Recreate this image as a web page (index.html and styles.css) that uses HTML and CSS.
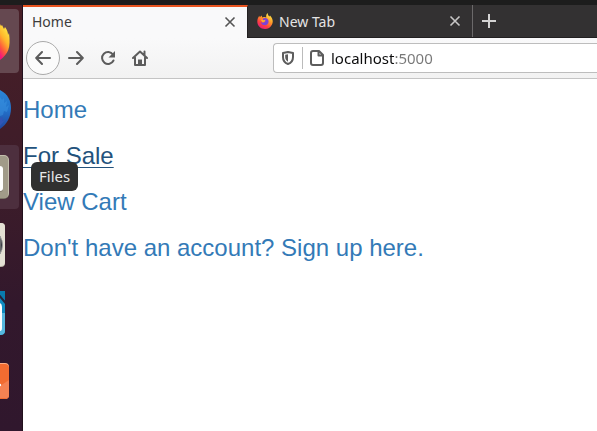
FILE: index.html
```
<!DOCTYPE html>
<html lang="en">
<head>
<meta charset="utf-8">
<title>Home</title>
<link rel="stylesheet" href="styles.css">
</head>
<body>
<div class="topbar"></div>
<div class="desktop">
  <nav class="dock" aria-label="Dock">
    <button class="tile tile-active" aria-label="Firefox">
      <svg width="19" height="64" viewBox="0 0 19 64">
        <defs><linearGradient id="fire" x1="0.7" y1="0" x2="0.3" y2="1"><stop offset="0" stop-color="#fff14a"/><stop offset=".45" stop-color="#ffb52b"/><stop offset=".75" stop-color="#ff5a3c"/><stop offset="1" stop-color="#f5157c"/></linearGradient></defs>
        <path d="M0 15l1 2 1-1 2 4 1-2c2 3 3 5 3 8l1-2c2 15-1 21-9 27z" fill="url(#fire)"/>
      </svg>
    </button>
    <button class="tile" aria-label="Thunderbird">
      <svg width="19" height="64" viewBox="0 0 19 64">
        <defs><linearGradient id="bird" x1="0" y1="0" x2="0" y2="1"><stop offset="0" stop-color="#2c86d8"/><stop offset=".5" stop-color="#2373cb"/><stop offset="1" stop-color="#2146a0"/></linearGradient></defs>
        <path d="M0 13C8 17 11 24 11 31c0 9-4 16-11 21z" fill="url(#bird)"/>
        <path d="M0 20l2 3 2-2v5l3-2-1 6 3-2-2 7-3-1-1 4-3 1z" fill="#429ae5" opacity=".4"/>
        <path d="M0 41l3-1-1 4 4-2-6 7z" fill="#3155b5"/>
      </svg>
    </button>
    <button class="tile tile-hover" aria-label="Files" aria-describedby="tip">
      <svg width="19" height="64" viewBox="0 0 19 64">
        <rect x="-30" y="11" width="39" height="43" rx="5" fill="#7d7768"/>
        <rect x="-30" y="10" width="39" height="43" rx="5" fill="#c4bfae"/>
        <rect x="-30" y="11" width="38" height="42" rx="4" fill="#a19b89"/>
        <rect x="-30" y="21" width="33" height="26" rx="3" fill="#857f70"/>
        <rect x="-30" y="21" width="33" height="25" rx="3" fill="#fff"/>
      </svg>
    </button>
    <button class="tile" aria-label="Rhythmbox">
      <svg width="19" height="64" viewBox="0 0 19 64">
        <rect x="-30" y="10" width="35" height="44" rx="4" fill="#b9b4a6"/>
        <rect x="-30" y="10" width="35" height="43" rx="4" fill="#e4e0d4"/>
        <path d="M0 23q5 9 0 18z" fill="#34373c" stroke="#999" stroke-width="1"/>
      </svg>
    </button>
    <button class="tile" aria-label="LibreOffice Writer">
      <svg width="19" height="64" viewBox="0 0 19 64">
        <path d="M0 10h5v10L0 14z" fill="#087bad"/>
        <path d="M0 15l5 6v29q0 4-5 4z" fill="#118bbf"/>
        <path d="M0 32h5v18q0 4-5 4z" fill="#55b8de"/>
        <path d="M0 22q2 1 2 4v21q0 3-2 3z" fill="#fff"/>
        <path d="M0 14l5 6v3l-5-6z" fill="#26243a"/>
      </svg>
    </button>
    <button class="tile" aria-label="Ubuntu Software">
      <svg width="19" height="64" viewBox="0 0 19 64">
        <rect x="-30" y="14" width="39" height="36" rx="4" fill="#ffaf85"/>
        <rect x="-30" y="15" width="39" height="35" rx="4" fill="#f26c31"/>
        <path d="M0 37l9-6v15q0 3-3 3H0z" fill="#f48253"/>
        <circle cx="0" cy="36" r="1.2" fill="#fff"/>
      </svg>
    </button>
  </nav>

  <div class="browser">
    <div class="tabs">
      <div class="tab tab-current">
        <button class="tab-label">Home</button>
        <button class="close" aria-label="Close Home tab"><svg width="12" height="12" viewBox="0 0 12 12"><path d="M1.500 1.500l9 9M10.500 1.500l-9 9"/></svg></button>
      </div>
      <div class="tab">
        <svg class="favicon" width="16" height="16" viewBox="0 0 16 16">
          <defs><linearGradient id="fox" x1=".8" y1="0" x2=".2" y2="1"><stop offset="0" stop-color="#fff44f"/><stop offset=".4" stop-color="#ff9a27"/><stop offset=".7" stop-color="#ff4040"/><stop offset="1" stop-color="#e31587"/></linearGradient></defs>
          <path d="M10.600 0c.2 2 1 2.700 1.900 3.500l.5-1c3 3 3.300 6.300 2 9C13.500 14.700 11 16 8 16 3.500 16 .3 12.700.3 8.500.3 6 1.200 4.200 2.300 2.800l.5 1.400L4.600 2.600l.7 1.800c2-.6 3.200-.5 4 .1C8.900 2.700 9.300 1.300 10.600 0z" fill="url(#fox)"/>
          <path d="M6 5.600c2.500-1.500 5.800 0 5.600 3.100-.2 2.700-2.600 3.900-4.800 3.300-1.600-.4-2.700-1.500-2.800-3.100 1.400 1 3.200.9 4.500-.3L6 8z" fill="#7b42d8"/>
          <path d="M3.500 6.500L7 7.300 8.500 6.500 8 8.300 5.800 9.500z" fill="#ffae2b"/>
        </svg>
        <button class="tab-label">New Tab</button>
        <button class="close" aria-label="Close New Tab"><svg width="12" height="12" viewBox="0 0 12 12"><path d="M1.500 1.500l9 9M10.500 1.500l-9 9"/></svg></button>
      </div>
      <button class="add" aria-label="Open a new tab"><svg width="14" height="14" viewBox="0 0 14 14"><path d="M7 0v14M0 7h14"/></svg></button>
    </div>

    <div class="toolbar">
      <button class="tool back" aria-label="Back"><svg width="16" height="16" viewBox="0 0 16 16"><path d="M15 8H1.500M7 2L1.200 8 7 14"/></svg></button>
      <button class="tool" aria-label="Forward"><svg width="16" height="16" viewBox="0 0 16 16"><path d="M1 8h13.500M9 2l5.800 6L9 14"/></svg></button>
      <button class="tool" aria-label="Reload"><svg width="16" height="16" viewBox="0 0 16 16"><path d="M13 4.500A6 6 0 1 0 13.500 10.500"/><path class="solid" d="M15 1v6.500H8.500z"/></svg></button>
      <button class="tool" aria-label="Home page"><svg width="16" height="16" viewBox="0 0 16 16"><path d="M1 8l7-6.500L15 8M3 7.500V15h10V7.500M12.500 1.500V5"/><path class="solid" d="M6 15V9.500h4V15z"/></svg></button>
      <div class="urlbar">
        <svg class="shield" width="14" height="16" viewBox="0 0 14 16"><path d="M7 1.900L12 3v4c0 3.500-2 6-5 7-3-1-5-3.500-5-7V3z"/><path class="solid" d="M7 4.200v7.600C5.100 10.700 4.200 9 4.200 7V4.800z"/></svg>
        <svg class="page-icon" width="14" height="16" viewBox="0 0 14 16"><path d="M3 1h6l4 4v8q0 2-2 2H3q-2 0-2-2V3q0-2 2-2zM8.500 1v4.500H13"/></svg>
        <input class="address" type="text" aria-label="Address" value="localhost:5000">
      </div>
    </div>

    <main class="page">
      <h3><a href="#home">Home</a></h3>
      <h3><a class="hovered" href="#sale">For Sale</a></h3>
      <h3><a href="#cart">View Cart</a></h3>
      <h3><a href="#signup">Don't have an account? Sign up here.</a></h3>
    </main>
  </div>
  <div class="tooltip" id="tip" role="tooltip">Files</div>
</div>
</body>
</html>
```
FILE: styles.css
```
* { box-sizing: border-box; }

body {
  display: flex;
  flex-direction: column;
  min-height: 100vh;
  margin: 0;
  overflow: hidden;
  background: #fff;
  font-family: "Liberation Sans", Arial, sans-serif;
}

button {
  margin: 0;
  padding: 0;
  border: 0;
  background: none;
  color: inherit;
  font: inherit;
}

svg { display: block; flex: none; }

.topbar { height: 5px; background: #1d1d1d; }

.desktop {
  position: relative;
  display: flex;
  flex: 1;
}

/* Launcher */
.dock {
  display: flex;
  flex: none;
  flex-direction: column;
  gap: 4px;
  width: 23px;
  padding-top: 4px;
  border-right: 1px solid #21101c;
  background: linear-gradient(#481f27, #3c1c2a 45%, #32182c 70%, #30172d);
}

.tile { width: 19px; height: 64px; border-radius: 0 4px 4px 0; }
.tile-active { background: #654850; }
.tile-hover { background: #4d2f3e; }

/* Browser chrome */
.browser { flex: 1; min-width: 0; background: #fff; }

.tabs,
.address,
.tooltip { font-family: "Noto Sans", sans-serif; }

.tabs {
  display: flex;
  height: 33px;
  border-bottom: 1px solid #222021;
  background: #333132;
  color: #e5e4e4;
  font-size: 14px;
}

.tab {
  display: flex;
  flex: 0 1 225px;
  align-items: center;
  gap: 6px;
  padding: 0 11px 0 9px;
  border-right: 1px solid #6b696a;
}

.tab-current {
  height: 33px;
  padding-bottom: 2px;
  border-top: 2px solid #e95420;
  border-right-color: #222021;
  background: #f9f9fa;
  color: #3d3d3d;
}

.tab-label { flex: 1; text-align: left; }
.close path { fill: none; stroke: #c8c7c7; stroke-width: 1.6px; }
.tab-current .close path { stroke: #555; }
.add { padding: 0 9px; }
.add path { stroke: #d4d3d3; stroke-width: 2; }

.toolbar {
  display: flex;
  align-items: center;
  height: 41px;
  padding-left: 3px;
  border-bottom: 1px solid #c4c4c4;
  background: linear-gradient(#f9f9fa, #f2f2f2);
}

.tool {
  display: grid;
  place-items: center;
  width: 32px;
  height: 34px;
}

.back {
  width: 34px;
  border: 1px solid #aaa;
  border-radius: 50%;
  background: #fbfbfb;
}

.tool path,
.urlbar path {
  fill: none;
  stroke: #5c5c5c;
  stroke-width: 2;
  stroke-linecap: round;
  stroke-linejoin: round;
}

.tool .solid,
.urlbar .solid { fill: #5c5c5c; stroke: none; }

.urlbar {
  display: flex;
  flex: 1;
  align-items: center;
  height: 30px;
  margin-left: 117px;
  padding-left: 7px;
  border: 1px solid #bdbdbd;
  border-right: 0;
  border-radius: 4px 0 0 4px;
  background: #fff;
}

.page-icon {
  box-sizing: content-box;
  height: 16px;
  margin-left: 7px;
  padding: 3px 0 3px 7px;
  border-left: 1px solid #bbb;
}

/* The host is black and the port is grey */
.address {
  flex: 1;
  min-width: 0;
  height: 24px;
  padding: 0 0 0 7px;
  border: 0;
  background: linear-gradient(90deg, #0c0c0d 71px, #777 71px);
  background-clip: text;
  color: transparent;
  font-size: 15px;
}

/* Page content */
.page { padding-top: 18px; }

h3 {
  margin: 0 0 20px;
  font-size: 24px;
  font-weight: 400;
  line-height: 26px;
}

a { color: #337ab7; text-decoration: none; }

.hovered {
  color: #23527c;
  text-decoration: underline;
  text-decoration-thickness: 1px;
  text-underline-offset: 3px;
  text-decoration-skip-ink: none;
}

.tooltip {
  position: absolute;
  top: 157px;
  left: 31px;
  padding: 4px 8px 5px;
  border-radius: 6px;
  background: #303030;
  color: #e8e8e8;
  font-size: 15px;
  line-height: 20px;
}
```
